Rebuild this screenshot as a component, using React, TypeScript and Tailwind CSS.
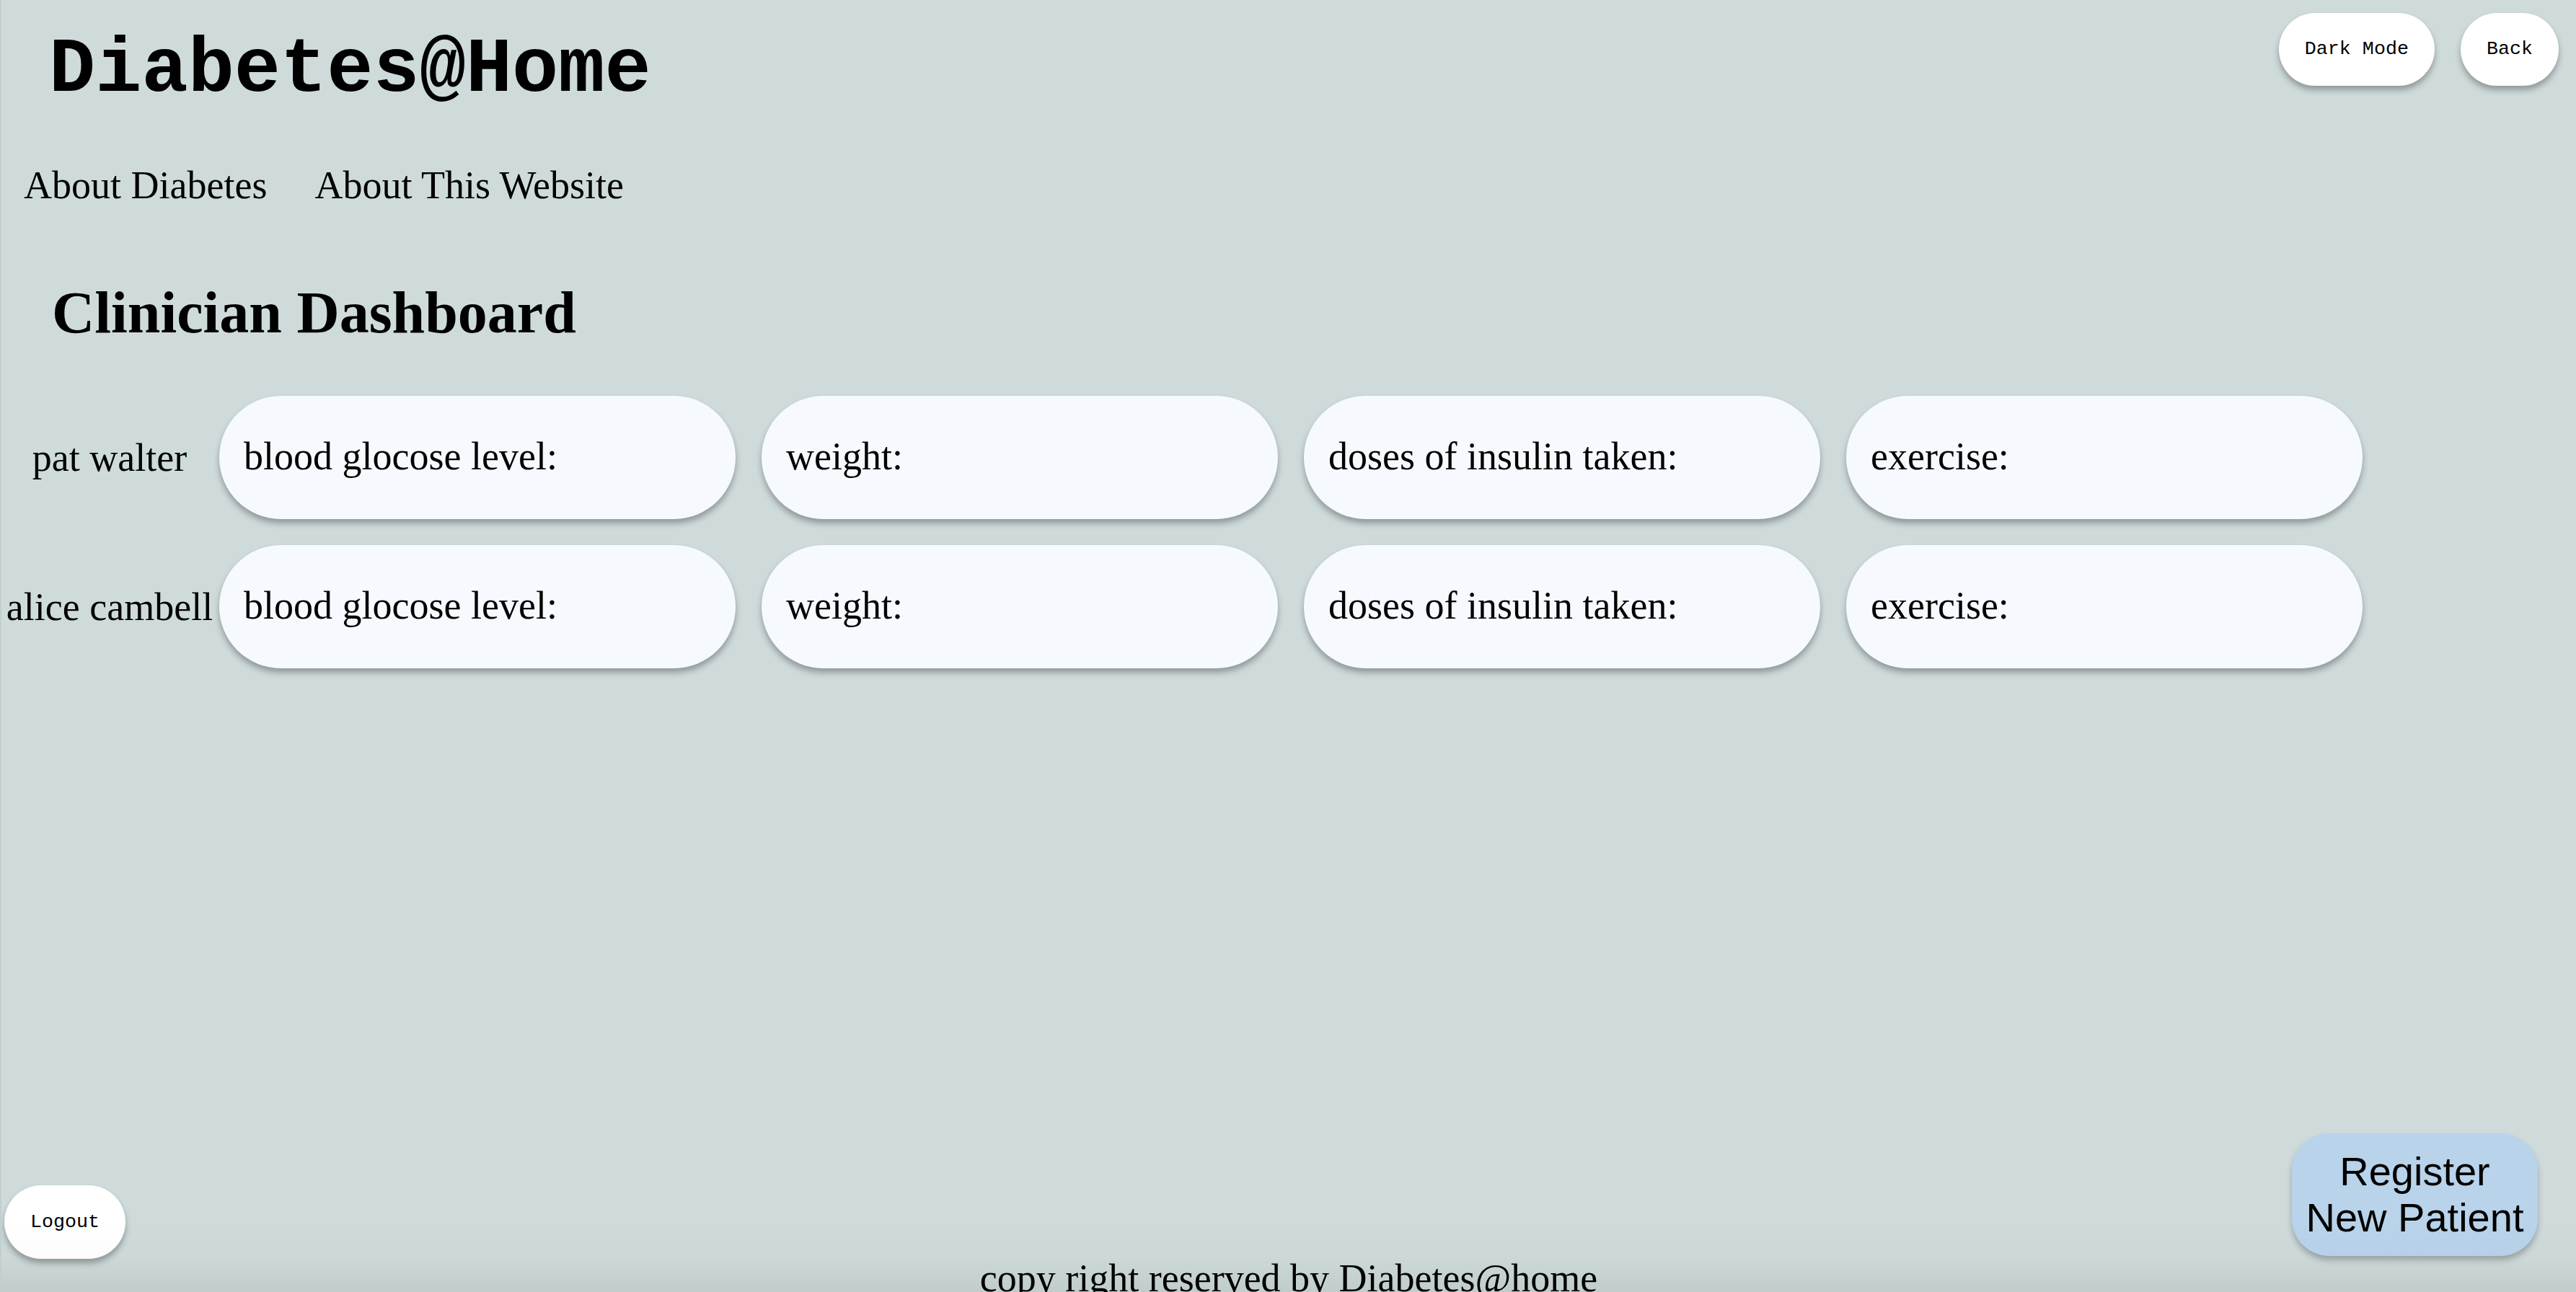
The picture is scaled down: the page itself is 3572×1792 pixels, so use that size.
import React from "react";

const serif = { fontFamily: '"Liberation Serif", "Times New Roman", serif' };

const fields = ["blood glocose level:", "weight:", "doses of insulin taken:", "exercise:"];
const patients = ["pat walter", "alice cambell"];

function PillButton({ label }: { label: string }) {
  return (
    <button className="h-[101px] px-[36px] rounded-full bg-white text-black text-[26.7px] leading-none font-['Liberation_Mono',monospace] shadow-[0_6px_8px_rgba(0,0,0,0.3)]">
      {label}
    </button>
  );
}

export default function App() {
  return (
    <div
      className="relative h-[1792px] w-full overflow-hidden bg-[#cfdbdb] text-black flex flex-col border-l-[2px] border-[#c3cfcf]"
      style={serif}
    >
      <header className="flex justify-between items-start">
        <h1 className="pt-[44px] pl-[66px] text-[107px] leading-none font-bold font-['Liberation_Mono',monospace]">
          Diabetes@Home
        </h1>
        <div className="flex gap-[36px] pt-[18px] pr-[24px]">
          <PillButton label="Dark Mode" />
          <PillButton label="Back" />
        </div>
      </header>

      <nav className="mt-[79px] pl-[31px] flex gap-[66px] text-[54px] leading-none font-['Liberation_Serif',serif]">
        <span>About Diabetes</span>
        <span>About This Website</span>
      </nav>

      <h2 className="mt-[109px] pl-[70px] text-[82px] leading-none font-bold font-['Liberation_Serif',serif]">
        Clinician Dashboard
      </h2>

      <div className="mt-[74px] flex flex-col gap-[36px] text-[54px] leading-none font-['Liberation_Serif',serif]">
        {patients.map((p) => (
          <div key={p} className="flex items-center">
            <div className="w-[300px] text-center whitespace-nowrap">{p}</div>
            <div className="ml-[2px] flex gap-[36px]">
              {fields.map((f) => (
                <div
                  key={f}
                  className="w-[716px] h-[171px] rounded-full bg-[#f6f9fe] shadow-[0_6px_8px_rgba(0,0,0,0.3)] flex items-center pl-[34px] pb-[4px]"
                >
                  {f}
                </div>
              ))}
            </div>
          </div>
        ))}
      </div>

      <div className="flex-1" />

      <div className="flex justify-between items-end">
        <button className="ml-[4px] w-[168px] h-[102px] rounded-full bg-white text-[26.7px] leading-none font-['Liberation_Mono',monospace] shadow-[0_6px_8px_rgba(0,0,0,0.3)]">
          Logout
        </button>
        <button className="mr-[53px] mb-[4px] w-[341px] h-[170px] rounded-[52px] bg-[#b8d3ea] text-[56px] leading-[64px] font-['Liberation_Sans',Arial,sans-serif] text-center shadow-[0_6px_8px_rgba(0,0,0,0.25)]">
          Register
          <br />
          New Patient
        </button>
      </div>

      <footer className="shrink-0 h-[54px] -mt-[60px] pt-[60px] -mb-[8px] box-content text-center text-[54px] leading-none font-['Liberation_Serif',serif] bg-gradient-to-b from-transparent via-[rgba(0,0,0,0.01)] to-[rgba(0,0,0,0.08)]">
        copy right reserved by Diabetes@home
      </footer>
    </div>
  );
}
